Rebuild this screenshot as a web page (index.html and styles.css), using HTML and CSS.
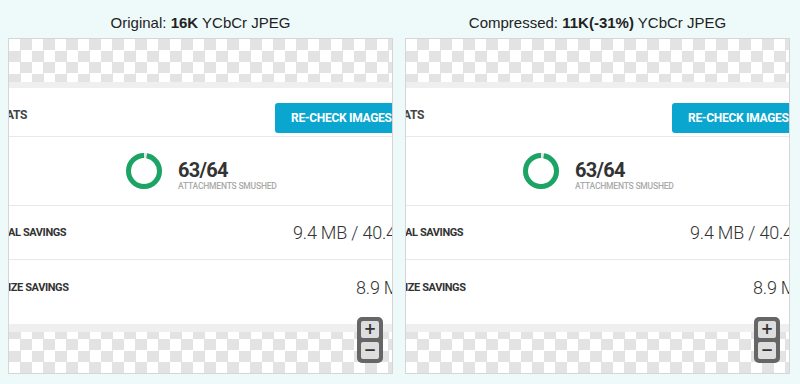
FILE: index.html
```html
<!DOCTYPE html>
<html lang="en">
<head>
  <meta charset="UTF-8">
  <meta name="viewport" content="width=device-width, initial-scale=1.0">
  <title>Smush compare</title>
  <link rel="stylesheet" href="styles.css">
</head>
<body>
  <main class="compare">
    <figure class="side">
      <figcaption class="side-title">Original: <b>16K</b> YCbCr JPEG</figcaption>
      <div class="viewer">
        <div class="checker checker-top"></div>
        <div class="page">
          <div class="row row-head">
            <span class="head-label">ATS</span>
            <button class="btn-recheck">RE-CHECK IMAGES</button>
          </div>
          <div class="row row-smush">
            <svg class="ring" width="38" height="38" viewBox="0 0 38 38">
              <circle cx="19" cy="19" r="15.5" fill="none" stroke="#e6e6e6" stroke-width="5"/>
              <circle cx="19" cy="19" r="15.5" fill="none" stroke="#1ba463" stroke-width="5"
                      stroke-dasharray="94.6 97.4" stroke-dashoffset="-2.8" transform="rotate(-90 19 19)"/>
            </svg>
            <div class="smush-text">
              <div class="smush-count">63/64</div>
              <div class="smush-note">ATTACHMENTS SMUSHED</div>
            </div>
          </div>
          <div class="row row-saving">
            <span class="saving-label">AL SAVINGS</span>
            <span class="saving-value">9.4 MB / 40.4</span>
          </div>
          <div class="row row-saving row-resize">
            <span class="saving-label">IZE SAVINGS</span>
            <span class="saving-value">8.9 M</span>
          </div>
        </div>
        <div class="checker checker-bottom"></div>
        <div class="zoom-ctrl">
          <button class="zoom-btn">+</button>
          <button class="zoom-btn">&minus;</button>
        </div>
      </div>
    </figure>

    <figure class="side">
      <figcaption class="side-title">Compressed: <b>11K(-31%)</b> YCbCr JPEG</figcaption>
      <div class="viewer">
        <div class="checker checker-top"></div>
        <div class="page">
          <div class="row row-head">
            <span class="head-label">ATS</span>
            <button class="btn-recheck">RE-CHECK IMAGES</button>
          </div>
          <div class="row row-smush">
            <svg class="ring" width="38" height="38" viewBox="0 0 38 38">
              <circle cx="19" cy="19" r="15.5" fill="none" stroke="#e6e6e6" stroke-width="5"/>
              <circle cx="19" cy="19" r="15.5" fill="none" stroke="#1ba463" stroke-width="5"
                      stroke-dasharray="94.6 97.4" stroke-dashoffset="-2.8" transform="rotate(-90 19 19)"/>
            </svg>
            <div class="smush-text">
              <div class="smush-count">63/64</div>
              <div class="smush-note">ATTACHMENTS SMUSHED</div>
            </div>
          </div>
          <div class="row row-saving">
            <span class="saving-label">AL SAVINGS</span>
            <span class="saving-value">9.4 MB / 40.4</span>
          </div>
          <div class="row row-saving row-resize">
            <span class="saving-label">IZE SAVINGS</span>
            <span class="saving-value">8.9 M</span>
          </div>
        </div>
        <div class="checker checker-bottom"></div>
        <div class="zoom-ctrl">
          <button class="zoom-btn">+</button>
          <button class="zoom-btn">&minus;</button>
        </div>
      </div>
    </figure>
  </main>
</body>
</html>
```

FILE: styles.css
```css
body {
  margin: 0;
  background-color: #eefafa;
  font-family: "Liberation Sans", Arial, sans-serif;
  color: #222;
}
.compare {
  display: grid;
  grid-template-columns: 385px 385px;
  column-gap: 12px;
  padding: 15px 0 0 8px;
}
.side {
  margin: 0;
}
.side-title {
  font-size: 15px;
  line-height: 16px;
  text-align: center;
  margin-bottom: 7px;
}
.viewer {
  position: relative;
  height: 334px;
  border: 1px solid #d6d6d6;
  background-color: #fff;
  display: flex;
  flex-direction: column;
  overflow: hidden;
}
.checker {
  background: repeating-conic-gradient(#e3e3e3 0 25%, #fff 0 50%) 0 0 / 23px 23px;
}
.checker-top {
  height: 43px;
}
.checker-bottom {
  height: 41px;
  background-position: 0 7px;
}
.page {
  flex: 1;
  border-top: 6px solid #efefef;
  border-bottom: 8px solid #efefef;
  font-family: Roboto, "Liberation Sans", sans-serif;
  color: #333;
}
.row {
  border-bottom: 1px solid #e8e8e8;
  white-space: nowrap;
}
.row-head {
  height: 30px;
  padding: 15px 0 3px;
  display: grid;
  grid-template-columns: 266px 150px;
  align-items: center;
}
.head-label {
  margin-left: -3px;
  margin-bottom: 6px;
  font-size: 12px;
  font-weight: 700;
  color: #444;
  letter-spacing: -0.3px;
}
.btn-recheck {
  height: 30px;
  border: none;
  border-radius: 3px;
  background-color: #0aa6cf;
  color: #fff;
  font-family: Roboto, sans-serif;
  font-size: 12px;
  font-weight: 700;
  letter-spacing: -0.3px;
  text-align: left;
  padding: 0 0 0 16px;
}
.row-smush {
  height: 68px;
  display: flex;
  align-items: center;
  padding-left: 116px;
}
.smush-text {
  margin-left: 15px;
  padding-top: 9px;
}
.smush-count {
  font-size: 20px;
  line-height: 20px;
  font-weight: 700;
  letter-spacing: -0.7px;
}
.smush-note {
  font-size: 8.5px;
  line-height: 12px;
  font-weight: 500;
  color: #aaa;
  letter-spacing: -0.2px;
}
.row-saving {
  height: 53px;
  display: flex;
  align-items: center;
}
.row-resize {
  height: 54px;
  border-bottom: none;
}
.saving-label {
  flex: 0 0 285px;
  margin-left: -1px;
  font-size: 11px;
  font-weight: 700;
  letter-spacing: -0.4px;
}
.row-resize .saving-label {
  flex-basis: 348px;
}
.saving-value {
  font-size: 18px;
  font-weight: 300;
  letter-spacing: -0.2px;
}
.zoom-ctrl {
  position: absolute;
  left: 348px;
  top: 278px;
  width: 18px;
  padding: 4px;
  display: flex;
  flex-direction: column;
  gap: 4px;
  background-color: #666;
  border-radius: 5px;
}
.zoom-btn {
  height: 17px;
  padding: 0;
  border: none;
  border-radius: 2px;
  background-color: #dedede;
  color: #333;
  font-family: "DejaVu Sans", sans-serif;
  font-size: 15px;
  font-weight: 700;
  line-height: 17px;
}
```
